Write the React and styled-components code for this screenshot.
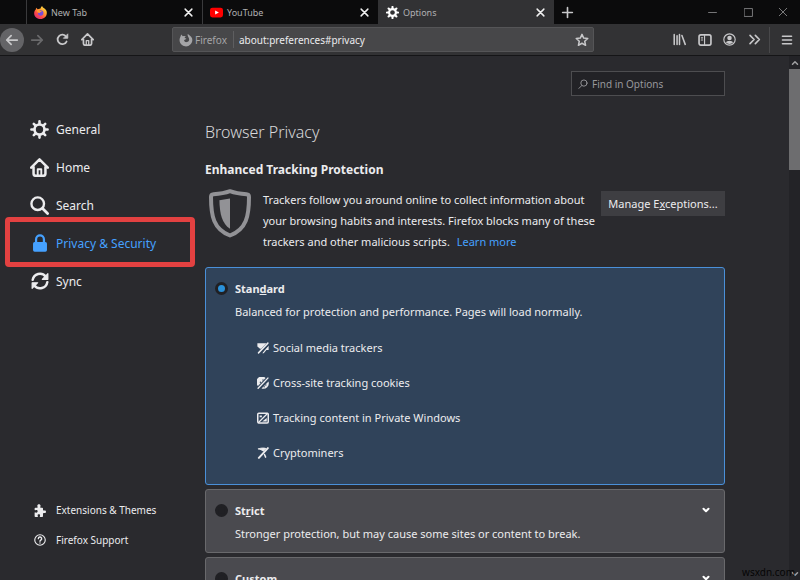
import React, { useState } from "react";
import styled, { createGlobalStyle } from "styled-components";

const GlobalStyle = createGlobalStyle`
  * {
    box-sizing: border-box;
  }
  body {
    margin: 0;
    background: #2a2a2e;
    color: #ececee;
    font-family: "Noto Sans", "Open Sans", sans-serif;
    font-size: 11px;
  }
  button, input {
    font-family: inherit;
    font-size: inherit;
    color: inherit;
    margin: 0;
  }
  h1, h2, p, ul {
    margin: 0;
    padding: 0;
  }
  svg {
    display: block;
    flex: none;
  }
`;

const Window = styled.div`
  display: flex;
  flex-direction: column;
  height: 100vh;
  overflow: hidden;
  position: relative;
`;

/* tab strip */
const TabStrip = styled.div`
  display: flex;
  height: 24px;
  padding-left: 26px;
  background: #0b0b0c;
`;
const Tab = styled.div`
  display: flex;
  align-items: center;
  flex: 0 1 176px;
  padding: 0 9px 0 7px;
  border-left: 1px solid ${(props) => (props.$active ? "#323234" : "#3a3a3c")};
  background: ${(props) => (props.$active ? "#323234" : "transparent")};
`;
const TabTitle = styled.button`
  display: flex;
  align-items: center;
  flex: 1;
  gap: 4px;
  padding: 0;
  border: 0;
  background: none;
  color: #b0b0b2;
  font-size: 9px;
  svg {
    color: #fff;
  }
`;
const IconButton = styled.button`
  display: flex;
  align-items: center;
  justify-content: center;
  width: ${(props) => props.$width || 24}px;
  height: ${(props) => props.$height || 24}px;
  padding: 0;
  border: 0;
  border-radius: ${(props) => (props.$round ? "50%" : "0")};
  background: ${(props) => (props.$round ? "#646467" : "none")};
  color: ${(props) => props.$color || "#c8c8ca"};
`;
const WindowButtons = styled.div`
  display: flex;
  margin-left: auto;
`;

/* toolbar */
const Toolbar = styled.div`
  display: flex;
  align-items: center;
  height: 32px;
  background: #323234;
  border-bottom: 1px solid #151517;
`;
const NavButtons = styled.div`
  display: flex;
  flex: 0 1 172px;
`;
const UrlBar = styled.div`
  display: flex;
  align-items: center;
  flex: 1;
  height: 25px;
  padding: 0 4px 0 6px;
  border: 1px solid #555557;
  border-radius: 2px;
  background: #474749;
  font-size: 10px;
`;
const Identity = styled.span`
  display: flex;
  align-items: center;
  gap: 2px;
  height: 17px;
  padding-right: 6px;
  border-right: 1px solid #5e5e60;
  color: #a5a5a7;
`;
const UrlInput = styled.input`
  flex: 1;
  min-width: 0;
  padding: 0 5px;
  border: 0;
  outline: 0;
  background: none;
`;
const Tools = styled.div`
  display: flex;
  align-items: center;
  justify-content: flex-end;
  flex: 0 0 206px;
`;
const Separator = styled.span`
  width: 1px;
  height: 26px;
  margin: 0 3px 0 2px;
  background: #48484a;
`;

/* preferences page */
const Page = styled.div`
  display: flex;
  flex: 1;
  min-height: 0;
`;
const Sidebar = styled.nav`
  display: flex;
  flex-direction: column;
  justify-content: space-between;
  flex: 0 0 205px;
  padding: 54px 10px 25px 5px;
`;
const Categories = styled.ul`
  list-style: none;
`;
const Category = styled.li`
  position: relative;
  height: ${(props) => (props.$small ? 30 : 38)}px;
`;
const CategoryLink = styled.a`
  display: flex;
  align-items: center;
  gap: 7px;
  height: 100%;
  padding-left: 25px;
  color: ${(props) => (props.$selected ? "#45a1ff" : "#ececee")};
  font-size: ${(props) => (props.$small ? 10 : 12)}px;
  text-decoration: none;
`;
const CategoryIcon = styled.span`
  display: flex;
  justify-content: center;
  width: 19px;
`;
const Highlight = styled.span`
  position: absolute;
  inset: -7px 0 -5px;
  border: 5px solid #e34141;
  border-radius: 4px;
  pointer-events: none;
`;
const Content = styled.main`
  flex: 1;
  min-width: 0;
  padding: 15px 64px 0 0;
  overflow: hidden;
`;
const SearchBox = styled.label`
  display: flex;
  align-items: center;
  gap: 4px;
  width: 154px;
  height: 25px;
  margin-left: auto;
  padding: 0 6px;
  border: 1px solid #4d4d50;
  background: #222226;
  color: #97979b;
  font-size: 10px;
`;
const SearchInput = styled.input`
  flex: 1;
  min-width: 0;
  padding: 0;
  border: 0;
  outline: 0;
  background: none;
  &::placeholder {
    color: #97979b;
    opacity: 1;
  }
`;
const Title = styled.h1`
  margin-top: 24px;
  color: #d8d8da;
  font-size: 16px;
  font-weight: 300;
  line-height: 24px;
`;
const SubTitle = styled.h2`
  margin-top: 16px;
  font-size: 12px;
  font-weight: 700;
  line-height: 20px;
`;
const Intro = styled.div`
  display: flex;
  align-items: flex-start;
  margin-top: 9px;
  padding-left: 3px;
`;
const IntroText = styled.p`
  flex: 1;
  padding-left: 11px;
  line-height: 21px;
`;
const LearnMore = styled.a`
  margin-left: 4px;
  color: #45a1ff;
  text-decoration: none;
`;
const Exceptions = styled.button`
  flex: none;
  width: 124px;
  height: 25px;
  margin-top: 2px;
  padding: 0;
  border: 0;
  background: #3e3e42;
`;
const Levels = styled.div`
  display: flex;
  flex-direction: column;
  gap: 4px;
  margin-top: 15px;
`;
const Level = styled.section`
  padding: 8px 8px 6px 9px;
  border: 1px solid ${(props) => (props.$checked ? "#4a90d9" : "#69696c")};
  border-radius: 3px;
  background: ${(props) => (props.$checked ? "#30435a" : "#4a4a4f")};
`;
const LevelHead = styled.div`
  display: flex;
  align-items: center;
  justify-content: space-between;
  height: 24px;
`;
const LevelLabel = styled.label`
  display: flex;
  align-items: center;
  gap: 7px;
  font-weight: 700;
`;
const Radio = styled.input`
  appearance: none;
  width: 13px;
  height: 13px;
  border: 3px solid #202024;
  border-radius: 50%;
  background: #202024;
  &:checked {
    background: #2a90d8;
  }
`;
const LevelText = styled.p`
  padding-left: 20px;
  line-height: 24px;
`;
const Blocked = styled.ul`
  padding: 6px 0 8px 42px;
  list-style: none;
`;
const BlockedItem = styled.li`
  display: flex;
  align-items: center;
  gap: 4px;
  height: 35px;
`;

/* scroll bar */
const ScrollBar = styled.div`
  display: flex;
  flex-direction: column;
  justify-content: space-between;
  flex: 0 0 11px;
  background: #232327;
`;
const Thumb = styled.div`
  height: 101px;
  margin-bottom: auto;
  background: #6d6d6f;
`;
const Watermark = styled.span`
  position: absolute;
  right: 5px;
  bottom: 1px;
  color: #050505;
  font-size: 10px;
  line-height: 14px;
`;

const Icon = ({ size = 12, children }) => (
  <svg
    width={size}
    height={size}
    viewBox="0 0 16 16"
    fill="none"
    stroke="currentColor"
    strokeWidth="2"
    strokeLinecap="round"
    strokeLinejoin="round"
    aria-hidden="true"
  >
    {children}
  </svg>
);

const Gear = ({ size, width = 2.2 }) => (
  <Icon size={size}>
    <circle cx="8" cy="8" r="4.200" strokeWidth={width} />
    <path
      d="M8 1.200v2M8 12.800v2M1.200 8h2M12.800 8h2M3.200 3.200l1.500 1.500M11.300 11.300l1.500 1.500M12.800 3.200l-1.500 1.500M4.700 11.300l-1.500 1.500"
      strokeWidth={width}
    />
  </Icon>
);
const House = ({ size }) => (
  <Icon size={size}>
    <path d="M1 8.200 8 1.200l7 7M3 7.500V13a2 2 0 0 0 2 2h6a2 2 0 0 0 2-2V7.500" strokeWidth="2.100" />
    <path d="M6.500 14.500V9.500h3v5" strokeWidth="1.600" />
  </Icon>
);
const Magnifier = () => (
  <Icon size={19}>
    <circle cx="6.500" cy="6.500" r="5.300" />
    <path d="m10.600 10.600 4.200 4.200" strokeWidth="2.300" />
  </Icon>
);
const Lock = () => (
  <Icon size={18}>
    <path d="M4.500 8V4.800a3.500 3.500 0 0 1 7 0V8" />
    <rect x="1.800" y="7" width="12.400" height="8.800" rx="1.500" fill="currentColor" stroke="none" />
  </Icon>
);
const SyncIcon = () => (
  <Icon size={18}>
    <path d="M1.500 7a6.500 6.500 0 0 1 11.500-3M14.500 9A6.500 6.500 0 0 1 3 12" strokeWidth="2.200" />
    <path d="M15 1.500V6.500H10zM1 14.500V9.500h5z" fill="currentColor" strokeWidth="1" />
  </Icon>
);
const Puzzle = () => (
  <Icon size={13}>
    <path
      d="M14.500 8h-1.200c-.8 0-1-.3-1-1V5.500c0-.6-.4-1-1-1H9.500c-.6 0-.8-.4-.5-1 .9-1.800-.2-3.200-1.700-3.200S4.700 1.700 5.600 3.500c.3.600.1 1-.5 1H3c-.6 0-1 .4-1 1v1.700c0 .5.400.800 1 .500 1.600-.8 2.700 0 2.700 1.300S4.600 11.200 3 10.400c-.6-.3-1 0-1 .5V15c0 .600.400 1 1 1h2.500c.6 0 .8-.4.500-1-.8-1.600 0-2.500 1.200-2.500s2 .900 1.200 2.500c-.3.600-.1 1 .500 1h2.400c.6 0 1-.4 1-1v-3c0-.7.300-1 1-1h1.200c.9 0 1.500-.6 1.500-1.500S15.400 8 14.500 8z"
      fill="currentColor"
      stroke="none"
    />
  </Icon>
);
const Help = () => (
  <Icon size={12}>
    <circle cx="8" cy="8" r="7" strokeWidth="1.500" />
    <path d="M5.800 6.200a2.200 2.200 0 1 1 3.300 1.900c-.8.500-1.100.8-1.100 1.600M8 12v.100" strokeWidth="1.900" />
  </Icon>
);
const Cross = ({ size = 9, width = 2.6 }) => (
  <Icon size={size}>
    <path d="m2 2 12 12M14 2 2 14" strokeWidth={width} />
  </Icon>
);
const Arrow = ({ flip }) => (
  <Icon size={14}>
    <path d={flip ? "M2 8h12M9 3l5 5-5 5" : "M14 8H2M7 3 2 8l5 5"} />
  </Icon>
);
const Reload = () => (
  <Icon size={13}>
    <path d="M13 10.500A5.800 5.800 0 1 1 12.500 4.500" strokeWidth="2.200" />
    <path d="M14.500 1.500v5h-5z" fill="currentColor" strokeWidth="1" />
  </Icon>
);
const FirefoxLogo = () => (
  <svg width="13" height="13" viewBox="0 0 16 16" aria-hidden="true">
    <defs>
      <linearGradient id="flame" x1="0.900" y1="0" x2="0.200" y2="1">
        <stop offset="0" stopColor="#fff04a" />
        <stop offset="0.400" stopColor="#ffa030" />
        <stop offset="0.700" stopColor="#ff4a45" />
        <stop offset="1" stopColor="#d82a7a" />
      </linearGradient>
    </defs>
    <path d="M2 4.500 2.700 2l1.800 2L8 3c.3-1.300 1-2.300 2-3 .2 2 4.500 3.200 5.500 6.500C16.800 11.800 13 16 8 16S0 12.500.200 8.500C.3 6.500 1 5.500 2 4.500z" fill="url(#flame)" />
    <circle cx="8.200" cy="8.500" r="3.400" fill="#7a4bd8" />
    <path d="M3.500 5.200c2-.8 3.500-.2 4.300.8l2 .2c-.2 1.200-2.800 1-2.600 2.200-1.500 1-3.700-.9-3.700-3.200z" fill="#ff9a2e" />
  </svg>
);
const FirefoxMono = () => (
  <Icon size={14}>
    <path
      d="M1.500 4.500 2.500 1.800l1.900 2C5.500 3.200 6.800 3.200 8 4c-1 .3-1.500.9-1.600 1.600l2 .6c-.2 1-1.900 1.300-2.600 2 .3 1.700 1.700 2.500 3.200 2.200 2.200-.5 3.100-2.500 2.300-4.500C10.600 4.300 9.500 3.300 10 1c1.500 1.200 3.800 2.200 4.900 4.900A7.300 7.300 0 1 1 1.500 4.500z"
      fill="currentColor"
      stroke="none"
    />
  </Icon>
);
const YouTubeLogo = () => (
  <svg width="13" height="13" viewBox="0 0 16 16" aria-hidden="true">
    <rect x="0" y="2" width="16" height="12" rx="3" fill="#f00" />
    <path d="m6.300 5.400 4.600 2.600-4.600 2.600z" fill="#fff" />
  </svg>
);
const Star = () => (
  <Icon size={14}>
    <path d="m8 1.500 1.900 4.300 4.700.5-3.500 3.100 1 4.700L8 11.700l-4.100 2.400 1-4.700L1.400 6.300l4.700-.5z" strokeWidth="1.700" />
  </Icon>
);
const Library = () => (
  <Icon size={13}>
    <path d="M1.500 2v12M5 3.500V14M8 2v12M11 3l4 11" strokeWidth="1.900" />
  </Icon>
);
const SidebarIcon = () => (
  <Icon size={14}>
    <rect x="1.200" y="2.200" width="13.600" height="11.600" rx="2" strokeWidth="1.900" />
    <path d="M7.500 3v10M3.800 5.500h1.500M3.800 8h1.500" strokeWidth="1.300" />
  </Icon>
);
const Account = () => (
  <Icon size={13}>
    <circle cx="8" cy="8" r="7" strokeWidth="1.400" />
    <circle cx="8" cy="6.200" r="2.800" fill="currentColor" stroke="none" />
    <path d="M3.500 11.500c1-1.200 2.200-1.800 4.500-1.800s3.500.6 4.500 1.800A5.800 5.800 0 0 1 8 13.600a5.800 5.800 0 0 1-4.500-2.100z" fill="currentColor" stroke="none" />
  </Icon>
);
const More = () => (
  <Icon size={13}>
    <path d="m2.500 3 5 5-5 5M9 3l5 5-5 5" />
  </Icon>
);
const Menu = () => (
  <Icon size={12}>
    <path d="M2 3h12M2 8h12M2 13h12" strokeWidth="2.200" />
  </Icon>
);
const Chevron = ({ up, size = 8, width = 3 }) => (
  <Icon size={size}>
    <path d={up ? "m3 10.500 5-5 5 5" : "m3 5.500 5 5 5-5"} strokeWidth={width} />
  </Icon>
);
const Shield = () => (
  <svg width="44" height="50" viewBox="0 0 44 50" fill="none" aria-hidden="true">
    <path
      d="M22 2.200c5 1.800 11 2.700 16.500 3.100 1.700.1 2.500 1 2.500 2.600C41 27 38.500 40 22 46.500 5.500 40 3 27 3 7.900c0-1.600.8-2.500 2.500-2.600C11 4.900 17 4 22 2.200z"
      stroke="#929296"
      strokeWidth="4"
      strokeLinejoin="round"
    />
    <path d="M22 9.500v30.300c-8-5-10.300-15-10.600-28.500z" fill="#929296" />
  </svg>
);
/* blocked content icons: the shape, a gap in the card colour, then the slash */
const Slash = () => (
  <>
    <path d="M16 3 4 15.500" stroke="#30435a" strokeWidth="2.200" />
    <path d="M14.500 1.500 2 14.500" strokeWidth="2" />
  </>
);
const ThumbBlocked = () => (
  <Icon size={12}>
    <path d="M.5 1.500h12L5.500 9H4L.5 6zM15.500 4v6.500h-3L9 15H7z" fill="currentColor" stroke="none" />
    <Slash />
  </Icon>
);
const CookieBlocked = () => (
  <Icon size={12}>
    <path d="M11.500 1.300A7.300 7.300 0 0 0 1.300 12zM15.300 6A7.300 7.300 0 0 1 6 15.300z" fill="currentColor" stroke="none" />
    <path d="M4.500 7v.1M8 4v.1M11.800 10.500v.1M9.500 13v.1" stroke="#30435a" strokeWidth="1.800" />
    <path d="M14.500 1.500 1.500 15" strokeWidth="1.900" />
  </Icon>
);
const ContentBlocked = () => (
  <Icon size={12}>
    <rect x="1" y="1.500" width="14" height="13" rx="1.500" />
    <path d="M14 2 2 14" strokeWidth="1.700" />
    <path d="M7 12.500h6V8zM3.500 4.500h3v2.500h-3z" fill="currentColor" stroke="none" />
  </Icon>
);
const MinerBlocked = () => (
  <Icon size={12}>
    <path d="M2 2.500C5 1.200 9 1 12 2L8.500 5.500C6.500 4 4.500 3 2 2.500z" fill="currentColor" strokeWidth="1.200" />
    <path d="m10 10 1.500 3.500" />
    <path d="M14.500 1.500 2.500 14.500" strokeWidth="2.600" />
  </Icon>
);

const tabs = [
  { title: "New Tab", icon: <FirefoxLogo /> },
  { title: "YouTube", icon: <YouTubeLogo /> },
  { title: "Options", icon: <Gear size={13} width={2.6} />, active: true },
];
const categories = [
  { id: "general", name: "General", icon: <Gear size={19} /> },
  { id: "home", name: "Home", icon: <House size={19} /> },
  { id: "search", name: "Search", icon: <Magnifier /> },
  { id: "privacy", name: "Privacy & Security", icon: <Lock /> },
  { id: "sync", name: "Sync", icon: <SyncIcon /> },
];
const helpLinks = [
  { id: "addons", name: "Extensions & Themes", icon: <Puzzle /> },
  { id: "support", name: "Firefox Support", icon: <Help /> },
];
const blocked = [
  { name: "Social media trackers", icon: <ThumbBlocked /> },
  { name: "Cross-site tracking cookies", icon: <CookieBlocked /> },
  { name: "Tracking content in Private Windows", icon: <ContentBlocked /> },
  { name: "Cryptominers", icon: <MinerBlocked /> },
];

function BrowserChrome() {
  return (
    <header>
      <TabStrip>
        {tabs.map((tab) => (
          <Tab key={tab.title} $active={tab.active}>
            <TabTitle>
              {tab.icon}
              {tab.title}
            </TabTitle>
            <IconButton $width={10} $color="#f0f0f0" aria-label="Close tab">
              <Cross />
            </IconButton>
          </Tab>
        ))}
        <IconButton $width={26} aria-label="Open a new tab">
          <Icon size={13}>
            <path d="M8 2v12M2 8h12" />
          </Icon>
        </IconButton>
        <WindowButtons>
          <IconButton $width={36} $color="#8a8a8c" aria-label="Minimize">
            <Icon size={9}>
              <path d="M1 8h14" strokeWidth="1.500" />
            </Icon>
          </IconButton>
          <IconButton $width={36} $color="#8a8a8c" aria-label="Maximize">
            <Icon size={9}>
              <path d="M1 1h14v14H1z" strokeWidth="1.500" />
            </Icon>
          </IconButton>
          <IconButton $width={34} $color="#8a8a8c" aria-label="Close window">
            <Cross size={10} width={1.4} />
          </IconButton>
        </WindowButtons>
      </TabStrip>
      <Toolbar>
        <NavButtons>
          <IconButton $round aria-label="Back">
            <Arrow />
          </IconButton>
          <IconButton $width={26} $color="#69696b" aria-label="Forward">
            <Arrow flip />
          </IconButton>
          <IconButton $width={24} aria-label="Reload">
            <Reload />
          </IconButton>
          <IconButton $width={26} aria-label="Home">
            <House size={13} />
          </IconButton>
        </NavButtons>
        <UrlBar>
          <Identity>
            <FirefoxMono />
            Firefox
          </Identity>
          <UrlInput aria-label="Address" defaultValue="about:preferences#privacy" />
          <IconButton $width={14} aria-label="Bookmark this page">
            <Star />
          </IconButton>
        </UrlBar>
        <Tools>
          <IconButton $width={25} aria-label="Library">
            <Library />
          </IconButton>
          <IconButton $width={25} aria-label="Sidebars">
            <SidebarIcon />
          </IconButton>
          <IconButton $width={25} aria-label="Account">
            <Account />
          </IconButton>
          <IconButton $width={25} aria-label="More tools">
            <More />
          </IconButton>
          <Separator />
          <IconButton $width={27} aria-label="Open menu">
            <Menu />
          </IconButton>
        </Tools>
      </Toolbar>
    </header>
  );
}

function App() {
  const [level, setLevel] = useState("standard");

  const head = (id, label) => (
    <LevelLabel>
      <Radio
        type="radio"
        name="level"
        checked={level === id}
        onChange={() => setLevel(id)}
      />
      <span>{label}</span>
    </LevelLabel>
  );

  return (
    <Window>
      <GlobalStyle />
      <BrowserChrome />
      <Page>
        <Sidebar>
          <Categories>
            {categories.map((ea) => (
              <Category key={ea.id}>
                <CategoryLink href={`#${ea.id}`} $selected={ea.id === "privacy"}>
                  <CategoryIcon>{ea.icon}</CategoryIcon>
                  {ea.name}
                </CategoryLink>
                {ea.id === "privacy" && <Highlight />}
              </Category>
            ))}
          </Categories>
          <Categories>
            {helpLinks.map((ea) => (
              <Category key={ea.id} $small>
                <CategoryLink href={`#${ea.id}`} $small>
                  <CategoryIcon>{ea.icon}</CategoryIcon>
                  {ea.name}
                </CategoryLink>
              </Category>
            ))}
          </Categories>
        </Sidebar>
        <Content>
          <SearchBox>
            <Icon size={10}>
              <circle cx="9.500" cy="6.500" r="5" strokeWidth="1.500" />
              <path d="M6 10.500 1.500 15" strokeWidth="1.500" />
            </Icon>
            <SearchInput aria-label="Find in Options" placeholder="Find in Options" />
          </SearchBox>
          <Title>Browser Privacy</Title>
          <SubTitle>Enhanced Tracking Protection</SubTitle>
          <Intro>
            <Shield />
            <IntroText>
              Trackers follow you around online to collect information about
              your browsing habits and interests. Firefox blocks many of these
              trackers and other malicious scripts.{" "}
              <LearnMore href="#learn">Learn more</LearnMore>
            </IntroText>
            <Exceptions>
              Manage E<u>x</u>ceptions...
            </Exceptions>
          </Intro>
          <Levels>
            <Level $checked={level === "standard"}>
              <LevelHead>{head("standard", <>Stan<u>d</u>ard</>)}</LevelHead>
              <LevelText>
                Balanced for protection and performance. Pages will load normally.
              </LevelText>
              <Blocked>
                {blocked.map((ea) => (
                  <BlockedItem key={ea.name}>
                    {ea.icon}
                    {ea.name}
                  </BlockedItem>
                ))}
              </Blocked>
            </Level>
            <Level $checked={level === "strict"}>
              <LevelHead>
                {head("strict", <>St<u>r</u>ict</>)}
                <IconButton $width={20} $color="#fff" aria-label="Expand Strict">
                  <Chevron width={4} />
                </IconButton>
              </LevelHead>
              <LevelText>
                Stronger protection, but may cause some sites or content to break.
              </LevelText>
            </Level>
            <Level $checked={level === "custom"}>
              <LevelHead>
                {head("custom", <><u>C</u>ustom</>)}
                <IconButton $width={20} $color="#fff" aria-label="Expand Custom">
                  <Chevron width={4} />
                </IconButton>
              </LevelHead>
            </Level>
          </Levels>
        </Content>
        <ScrollBar>
          <IconButton $width={11} $height={13} $color="#a0a0a2" aria-label="Scroll up">
            <Chevron up />
          </IconButton>
          <Thumb />
          <IconButton $width={11} $height={13} $color="#a0a0a2" aria-label="Scroll down">
            <Chevron />
          </IconButton>
        </ScrollBar>
      </Page>
      <Watermark>wsxdn.com</Watermark>
    </Window>
  );
}

export default App;
